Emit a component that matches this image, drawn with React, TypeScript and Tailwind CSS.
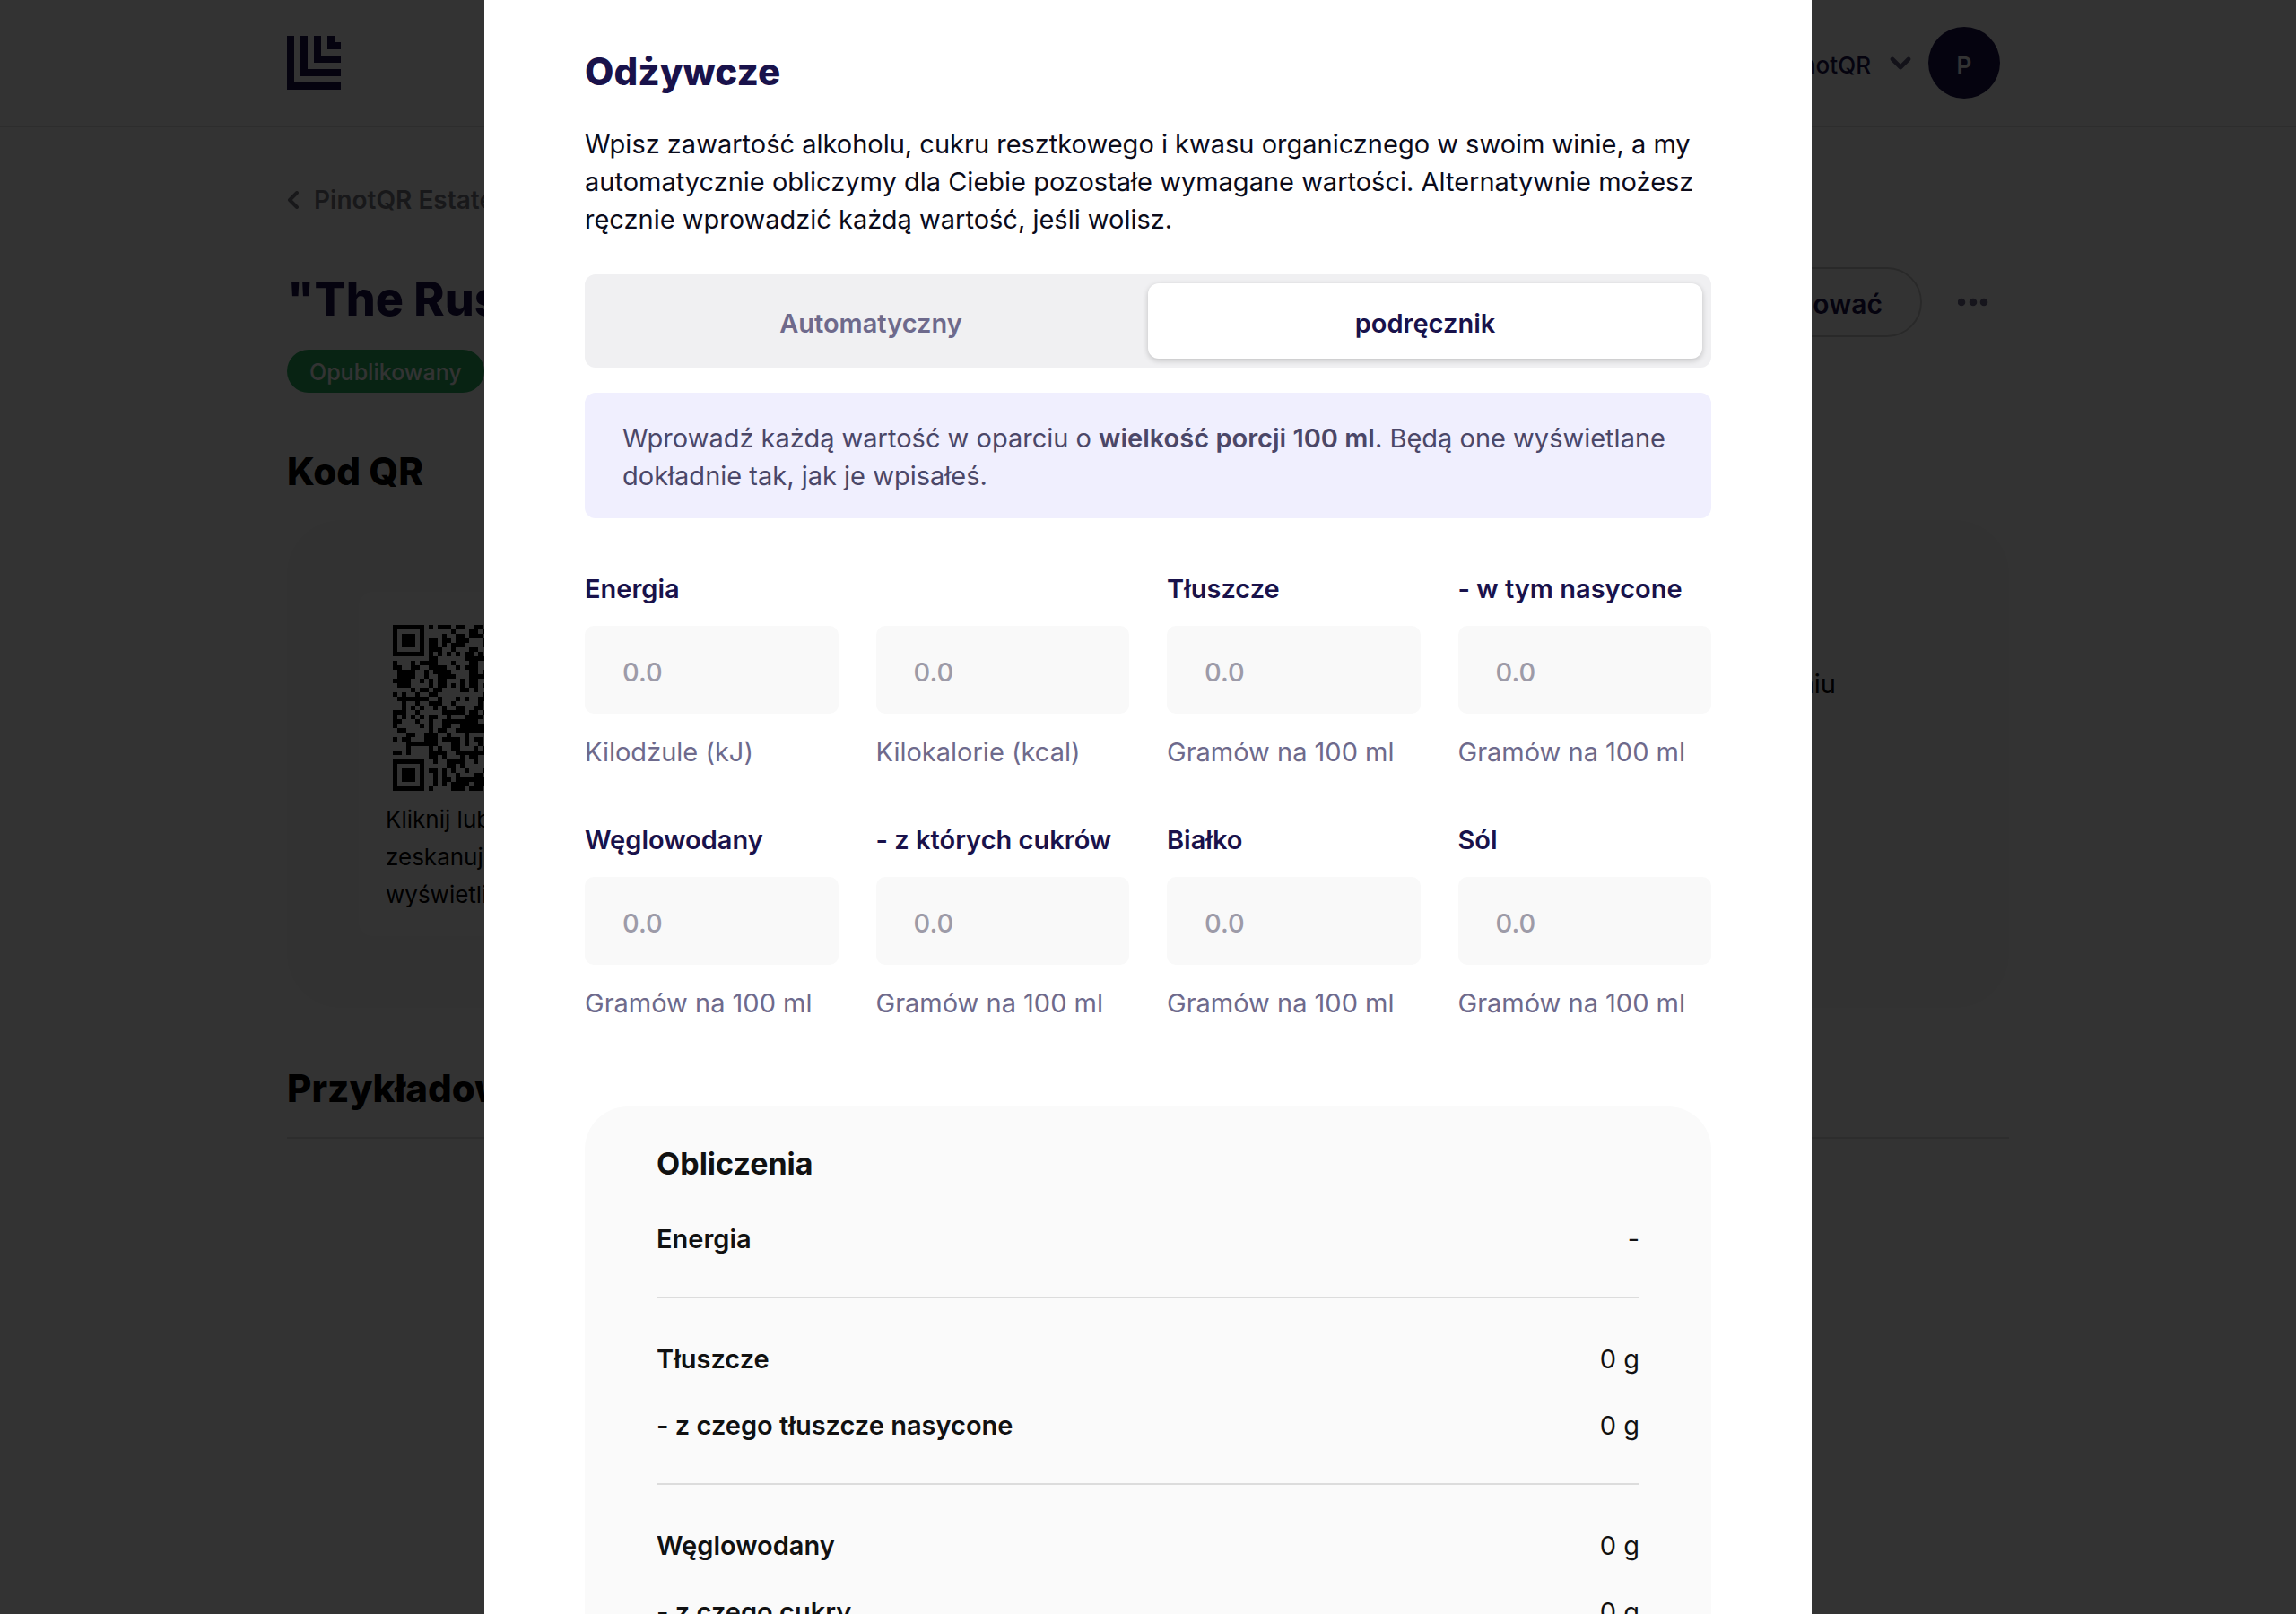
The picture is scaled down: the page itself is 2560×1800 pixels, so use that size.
import React, { useState } from 'react';

interface NutrientField {
  id: string;
  label?: string;
  unit: string;
}

interface CalculationRow {
  name: string;
  value: string;
}

const FIELDS: NutrientField[] = [
  { id: 'energy-kj', label: 'Energia', unit: 'Kilodżule (kJ)' },
  { id: 'energy-kcal', unit: 'Kilokalorie (kcal)' },
  { id: 'fat', label: 'Tłuszcze', unit: 'Gramów na 100 ml' },
  { id: 'saturates', label: '- w tym nasycone', unit: 'Gramów na 100 ml' },
  { id: 'carbs', label: 'Węglowodany', unit: 'Gramów na 100 ml' },
  { id: 'sugars', label: '- z których cukrów', unit: 'Gramów na 100 ml' },
  { id: 'protein', label: 'Białko', unit: 'Gramów na 100 ml' },
  { id: 'salt', label: 'Sól', unit: 'Gramów na 100 ml' }
];

const CALCULATIONS: CalculationRow[][] = [
  [{ name: 'Energia', value: '-' }],
  [
    { name: 'Tłuszcze', value: '0 g' },
    { name: '- z czego tłuszcze nasycone', value: '0 g' }
  ],
  [
    { name: 'Węglowodany', value: '0 g' },
    { name: '- z czego cukry', value: '0 g' }
  ]
];

const QR_ROWS = [
  '####### # ### ##  ## ',
  '#     #      #   ## #',
  '# ### #    #  ## ### ',
  '# ### # ## ## ###   #',
  '# ### # ## # ###    #',
  '#     # ###  #   ##  ',
  '####### # # # # ## # ',
  '        ##      #####',
  '#   # ####   #   ##  ',
  '##  ##  ####  # ###  ',
  ' ####  # ####    ## #',
  ' ####  #  ####   ####',
  '####  # # ##   # ##  ',
  ' ###    # ## # # ## #',
  '    # ## ##    ## #  ',
  '# #  #  ##          #',
  ' #######  #   # #  ##',
  '  #  #  ###  #     # ',
  '  # # #  # #  ##  ## ',
  '###  #     ##### ## #',
  '# # # # ##  #   #### ',
  '##   #  #  ########  ',
  '#     # #  ##  ######',
  ' ##     # ##  #######',
  '   ##  ###  #   #    ',
  '# ##   ### #### # ## ',
  '   #######   ## #  # ',
  '   #    # #  ##   # #',
  '## #    ####  #######',
  '        ## #   # ##  ',
  '#######  #  ####  #  ',
  '#     #     ## #     ',
  '# ### # ## # #  #   #',
  '# ### #  # #  #   ## ',
  '# ### #  # ## #######',
  '#     #  # # #### ###',
  '####### #    ### ### '
];

const Logo: React.FC = () => (
  <svg viewBox="0 0 60 60" className="h-[60px] w-[60px] fill-[#19124b]" aria-hidden="true">
    <path d="M0 0h8v52h52v8H0z" />
    <path d="M15 0h8v37h37v8H15z" />
    <path d="M30 0h8v22h22v8H30z" />
    <path d="M45 0h8v7h7v8H45z" />
  </svg>
);

const QrCode: React.FC = () => (
  <svg viewBox="0 0 37 37" className="ml-2 h-[185px] w-[185px]" shapeRendering="crispEdges" aria-hidden="true">
    {QR_ROWS.map((row, y) =>
      row.split('').map((cell, x) => (cell === '#' ? <rect key={`${x}-${y}`} x={x} y={y} width="1" height="1" /> : null))
    )}
  </svg>
);

const Header: React.FC = () => (
  <header className="border-b-2 border-[#dedede]">
    <div className="mx-auto flex h-[140px] max-w-[1920px] items-center justify-between">
      <a href="#">
        <Logo />
      </a>
      <button className="flex h-[100px] items-center rounded-full bg-[#fcfcfc] pr-2.5 pl-10">
        <span className="pt-1 text-[26px] font-medium text-[#19124b]">PinotQR</span>
        <svg viewBox="0 0 24 15" className="mr-[19px] ml-[21px] h-[15px] w-6" fill="none" aria-hidden="true">
          <path d="M3 3l9 9 9-9" stroke="#5f5a7c" strokeWidth="4.6" strokeLinecap="round" strokeLinejoin="round" />
        </svg>
        <span className="flex h-20 w-20 items-center justify-center rounded-full bg-[#19124b] pt-1 text-[26px] font-semibold text-white">
          P
        </span>
      </button>
    </div>
  </header>
);

const ProductPage: React.FC = () => (
  <main className="mx-auto max-w-[1920px] pt-[60px]">
    <a href="#" className="flex items-center text-[28px] leading-[42px] font-semibold text-[#7b7b82]">
      <svg viewBox="0 0 14 20" className="mr-4 h-5 w-3.5" fill="none" aria-hidden="true">
        <path d="M11 2L3 10l8 8" stroke="currentColor" strokeWidth="4" strokeLinecap="round" strokeLinejoin="round" />
      </svg>
      PinotQR Estate
    </a>

    <div className="mt-[54px] flex items-start justify-between">
      <div>
        <h1 className="text-[52px] leading-[72px] font-extrabold text-[#19124b]">"The Rush"</h1>
        <span className="mt-5 inline-flex h-12 items-center rounded-full bg-[#28b062] px-[25px] pt-1 text-[25px] font-medium text-white">
          Opublikowany
        </span>
      </div>
      <div className="flex items-center">
        <button className="h-[78px] rounded-full border-2 border-[#cccccc] px-[42px] pt-1 text-[30px] font-semibold text-[#19124b]">
          Redagować
        </button>
        <button className="mr-[23px] ml-10" aria-label="Więcej">
          <svg viewBox="0 0 34 10" className="h-2.5 w-[34px] fill-[#6e6a8c]" aria-hidden="true">
            <circle cx="4" cy="5" r="4.3" />
            <circle cx="17" cy="5" r="4.3" />
            <circle cx="29" cy="5" r="4.3" />
          </svg>
        </button>
      </div>
    </div>

    <h2 className="mt-[60px] text-[42px] leading-[56px] font-extrabold">Kod QR</h2>
    <section className="mt-[26px] flex items-start justify-between rounded-[60px] bg-[#fafafa] py-20 pr-[193px] pl-20">
      <div className="w-[265px] rounded-2xl bg-white px-[30px] pt-[37px] pb-[25px]">
        <QrCode />
        <p className="mt-[11px] text-[26px] leading-[42px]">Kliknij lub zeskanuj, aby wyświetlić</p>
      </div>
      <p className="mt-[82px] text-[29px] leading-[42px]">opublikowaniu</p>
    </section>

    <h2 className="mt-[62px] border-b-2 border-[#dedede] pb-[26px] text-[42px] leading-[56px] font-extrabold">
      Przykładowe
    </h2>
  </main>
);

const Field: React.FC<{ field: NutrientField }> = ({ field }) => (
  <div className="flex min-w-0 flex-col">
    <div className="h-[42px] text-[29px] leading-[42px] font-semibold whitespace-nowrap text-[#19124b]">
      {field.label && <label htmlFor={field.id}>{field.label}</label>}
    </div>
    <input
      id={field.id}
      type="text"
      inputMode="decimal"
      placeholder="0.0"
      className="mt-5 h-[98px] w-full rounded-[10px] bg-[#f9f9f9] px-[42px] pt-1 text-[29px] font-medium text-[#19124b] placeholder:text-[#9d9ba8]"
    />
    <label htmlFor={field.id} className="mt-[22px] text-[29px] leading-[42px] whitespace-nowrap text-[#6e6a8c]">
      {field.unit}
    </label>
  </div>
);

const Calculations: React.FC = () => (
  <section className="mt-[94px] rounded-[48px] bg-[#fafafa] px-20 pt-10 pb-20 text-[#111111]">
    <h3 className="text-[34px] leading-[48px] font-bold">Obliczenia</h3>
    <div className="mt-[39px] divide-y-2 divide-[#dcdcdc]">
      {CALCULATIONS.map((group) => (
        <dl key={group[0].name} className="flex flex-col gap-8 pt-[47px] pb-[43px] text-[29px] leading-[42px] first:pt-0">
          {group.map((row) => (
            <div key={row.name} className="flex justify-between">
              <dt className="font-semibold">{row.name}</dt>
              <dd>{row.value}</dd>
            </div>
          ))}
        </dl>
      ))}
    </div>
  </section>
);

const NutritionDialog: React.FC = () => {
  const [mode, setMode] = useState<'auto' | 'manual'>('manual');
  const active = 'bg-white text-[#19124b] shadow-[0_2px_6px_rgba(0,0,0,0.2)]';
  const idle = 'text-[#6e6a8c]';

  return (
    <div className="fixed inset-0 overflow-hidden bg-black/80">
      <div role="dialog" aria-labelledby="nutrition-title" className="mx-auto min-h-full max-w-[1480px] bg-white px-28 pt-[52px]">
        <h2 id="nutrition-title" className="text-[42px] leading-[56px] font-extrabold text-[#19124b]">
          Odżywcze
        </h2>
        <p className="mt-8 text-[29px] leading-[42px] text-[#0b0b1a]">
          Wpisz zawartość alkoholu, cukru resztkowego i kwasu organicznego w swoim winie, a my automatycznie obliczymy dla
          Ciebie pozostałe wymagane wartości. Alternatywnie możesz ręcznie wprowadzić każdą wartość, jeśli wolisz.
        </p>

        <div className="mt-10 grid grid-cols-2 rounded-xl bg-[#f0f0f2] p-2.5 text-[29px] font-semibold">
          <button
            onClick={() => setMode('auto')}
            className={`h-[84px] rounded-xl pt-1.5 ${mode === 'auto' ? active : idle}`}
          >
            Automatyczny
          </button>
          <button
            onClick={() => setMode('manual')}
            className={`h-[84px] rounded-xl pt-1.5 ${mode === 'manual' ? active : idle}`}
          >
            podręcznik
          </button>
        </div>

        <p className="mt-7 rounded-xl bg-[#f0effe] px-[42px] pt-[30px] pb-[26px] text-[29px] leading-[42px] text-[#4b4768]">
          Wprowadź każdą wartość w oparciu o <strong className="font-semibold">wielkość porcji 100 ml</strong>. Będą one
          wyświetlane dokładnie tak, jak je wpisałeś.
        </p>

        <div className="mt-[58px] grid grid-cols-4 gap-x-[42px] gap-y-14">
          {FIELDS.map((field) => (
            <Field key={field.id} field={field} />
          ))}
        </div>

        <Calculations />
      </div>
    </div>
  );
};

export default function App() {
  return (
    <div className="min-h-screen bg-white font-[Inter,sans-serif] text-black">
      <Header />
      <ProductPage />
      <NutritionDialog />
    </div>
  );
}
